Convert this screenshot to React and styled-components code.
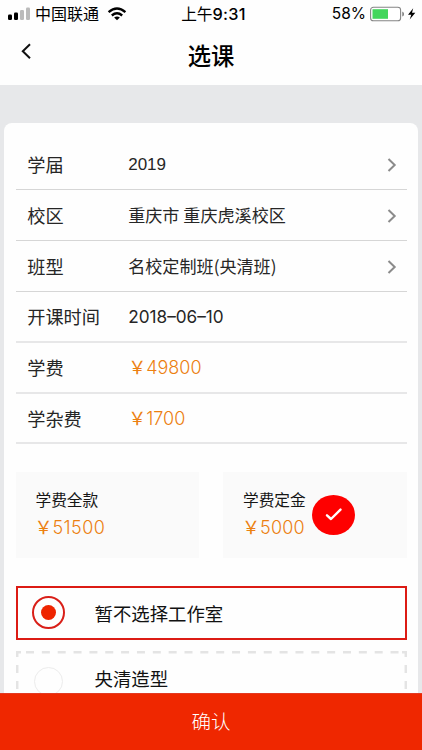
import React from "react";
import styled, { createGlobalStyle } from "styled-components";

const GlobalStyle = createGlobalStyle`
  * { box-sizing: border-box; }
  body {
    margin: 0;
    background: #e7e8ea;
    font-family: "Noto Sans CJK SC", sans-serif;
    color: #262626;
  }
`;

const Screen = styled.div`
  display: flex;
  flex-direction: column;
  width: 422px;
  height: 750px;
  overflow: hidden;
  background: #e7e8ea;
`;

const Header = styled.header`
  flex: none;
  height: 85px;
  background: #fefefe;
  color: #000;
`;

const StatusBar = styled.div`
  display: grid;
  grid-template-columns: 1fr auto 1fr;
  align-items: center;
  height: 28px;
  padding: 0 6px 0 8px;
  line-height: 28px;
`;

const Carrier = styled.div`
  display: flex;
  align-items: center;
  gap: 5px;
  height: 28px;
  font-size: 16px;
`;

const CarrierName = styled.span`
  height: 28px;
  line-height: 27px;
`;

const SignalIcon = styled.svg`
  display: block;
  width: 22px;
  height: 14px;
`;

const WifiIcon = styled.svg`
  display: block;
  width: 20px;
  height: 14px;
  margin-left: 3px;
`;

const Clock = styled.div`
  display: flex;
  height: 28px;
  padding-left: 3px;
  font-size: 15.7px;
  line-height: 28px;
`;

const ClockDigits = styled.span`
  font-family: Inter, sans-serif;
  font-weight: 500;
  font-size: 16.3px;
  letter-spacing: 0.3px;
`;

const Power = styled.div`
  display: flex;
  justify-content: flex-end;
  align-items: center;
  gap: 4px;
  height: 28px;
  font-family: Inter, sans-serif;
  font-size: 15.5px;
  line-height: 28px;
`;

const BatteryIcon = styled.svg`
  display: block;
  width: 46px;
  height: 16px;
`;

const NavBar = styled.nav`
  display: grid;
  grid-template-columns: 60px 1fr 60px;
  height: 57px;
`;

const BackButton = styled.button`
  display: flex;
  padding: 14px 0 0 20px;
  border: 0;
  background: none;
  color: #000;
`;

const Title = styled.h1`
  margin: 0;
  padding-top: 9px;
  text-align: center;
  font-size: 23.3px;
  line-height: 36px;
  font-weight: 500;
`;

const Content = styled.main`
  flex: 1;
  min-height: 0;
  overflow: hidden;
  padding: 38px 4px 0;
`;

const Card = styled.section`
  height: 700px;
  padding: 16px 11px 0 11.5px;
  border-radius: 8px;
  background: #fefefe;
`;

const Row = styled.div`
  display: grid;
  grid-template-columns: 101px 1fr auto;
  align-items: center;
  height: ${(p) => p.$height || 51}px;
  padding: 0 10.5px 1px 11.7px;
  border-bottom: ${(p) => (p.$thick ? "2px solid #e7e7e8" : "1px solid #d6d6d6")};
`;

const Label = styled.span`
  font-size: 18.2px;
  line-height: 26px;
`;

const Value = styled.span`
  font-size: 17.1px;
  line-height: 26px;
`;

const Digits = styled.span`
  font-family: "Liberation Sans", sans-serif;
  font-size: 17px;
`;

const DateDigits = styled.span`
  font-family: Inter, sans-serif;
  font-weight: 400;
  font-size: 17.2px;
  letter-spacing: 0;
`;

const Money = styled.span`
  color: #ec8010;
  font-size: 18px;
  line-height: 26px;
`;

const Amount = styled.span`
  font-family: Inter, sans-serif;
  font-weight: 350;
  font-size: 18px;
  letter-spacing: ${(p) => p.$spacing || 0}px;
`;

const PlanList = styled.div`
  display: flex;
  gap: 24px;
  margin-top: 28px;
`;

const Plan = styled.button`
  display: flex;
  align-items: flex-start;
  gap: 6px;
  width: 183.5px;
  height: 86px;
  padding: 15px 0 0 20px;
  border: 0;
  background: #fafafa;
  text-align: left;
  font: inherit;
  color: #161616;
`;

const PlanText = styled.span`
  display: flex;
  flex-direction: column;
  width: 63px;
  white-space: nowrap;
`;

const PlanName = styled.span`
  font-size: 15.7px;
  line-height: 26px;
`;

const PlanPrice = styled(Money)`
  margin-left: -1px;
`;

const CheckBadge = styled.span`
  display: flex;
  align-items: center;
  justify-content: center;
  width: 43px;
  height: 40px;
  margin-top: 8px;
  border-radius: 50%;
  background: #fe0000;
`;

const Studio = styled.label`
  display: flex;
  align-items: center;
  position: relative;
  height: 54px;
  margin-top: ${(p) => (p.$selected ? 28 : 11)}px;
  padding-left: ${(p) => (p.$selected ? 14 : 18)}px;
  border: ${(p) => (p.$selected ? "2.5px solid #dc1b14" : "0")};
`;

const DashedFrame = styled.svg`
  position: absolute;
  inset: 0;
  width: 391px;
  height: 54px;
`;

const Radio = styled.span`
  display: flex;
  align-items: center;
  justify-content: center;
  width: ${(p) => (p.$selected ? 33 : 29)}px;
  height: ${(p) => (p.$selected ? 33 : 29)}px;
  margin: ${(p) => (p.$selected ? "0 0 2px" : "6px 0 0")};
  border: ${(p) => (p.$selected ? "2px solid #d91f18" : "1px solid #ececec")};
  border-radius: 50%;
`;

const RadioDot = styled.span`
  width: 15px;
  height: 15px;
  border-radius: 50%;
  background: #ee2400;
`;

const StudioName = styled.span`
  margin-left: ${(p) => p.$gap}px;
  font-size: 18.4px;
  line-height: 26px;
  color: #111;
`;

const ConfirmButton = styled.button`
  flex: none;
  height: 57px;
  padding: 0 0 4px;
  border: 0;
  border-top: 1px solid #e33a22;
  background: #ef2700;
  color: #fff;
  font-family: inherit;
  font-size: 19.5px;
  font-weight: 300;
`;

function Chevron() {
  return (
    <svg width="10" height="16" viewBox="0 0 10 16" fill="none" stroke="#8b8b8b" strokeWidth="2">
      <path d="M1.5 3 7.7 9 1.5 15" />
    </svg>
  );
}

export default function App() {
  return (
    <Screen>
      <GlobalStyle />
      <Header>
        <StatusBar>
          <Carrier>
            <SignalIcon viewBox="0 0 22 14">
              <rect x="0" y="7.5" width="4" height="5.5" rx="1.2" />
              <rect x="6" y="5.5" width="4" height="7.5" rx="1.2" />
              <rect x="12" y="3" width="4" height="10" rx="1.2" fill="#bbb" />
              <rect x="18" y="0.5" width="4" height="12.5" rx="1.2" fill="#bbb" />
            </SignalIcon>
            <CarrierName>中国联通</CarrierName>
            <WifiIcon viewBox="0 0 20 14" fill="none" stroke="#000" strokeWidth="2.4">
              <path d="M1.6 5.1Q10-2.2 18.4 5.1" />
              <path d="M4.8 8.5Q10 4.2 15.2 8.5" />
              <path d="M10 13.2 7.1 10.6Q10 8.3 12.9 10.6Z" fill="#000" stroke="none" />
            </WifiIcon>
          </Carrier>
          <Clock>
            上午<ClockDigits>9:31</ClockDigits>
          </Clock>
          <Power>
            <span>58%</span>
            <BatteryIcon viewBox="0 0 46 16">
              <rect x="0.6" y="1.2" width="30" height="13.6" rx="2.8" fill="#fff" stroke="#858585" strokeWidth="1.1" />
              <rect x="2.5" y="3.2" width="15.5" height="9.6" fill="#43d65c" />
              <path d="M32.3 5.5Q34 6 34 8T32.3 10.5Z" fill="#777" />
              <path d="M43.2 2.3 38 8.7H41.3L39.7 13.6 45.3 6.8H42Z" />
            </BatteryIcon>
          </Power>
        </StatusBar>
        <NavBar>
          <BackButton aria-label="返回">
            <svg width="12" height="18" viewBox="0 0 12 18" fill="none" stroke="#111" strokeWidth="2">
              <path d="M10 2.3 2.8 9.3 10 16.3" />
            </svg>
          </BackButton>
          <Title>选课</Title>
        </NavBar>
      </Header>
      <Content>
        <Card>
          <Row>
            <Label>学届</Label>
            <Value><Digits>2019</Digits></Value>
            <Chevron />
          </Row>
          <Row>
            <Label>校区</Label>
            <Value>重庆市 重庆虎溪校区</Value>
            <Chevron />
          </Row>
          <Row>
            <Label>班型</Label>
            <Value>名校定制班(央清班)</Value>
            <Chevron />
          </Row>
          <Row $thick>
            <Label>开课时间</Label>
            <Value><DateDigits>2018–06–10</DateDigits></Value>
          </Row>
          <Row $thick>
            <Label>学费</Label>
            <Money>￥<Amount>49800</Amount></Money>
          </Row>
          <Row $thick $height={50}>
            <Label>学杂费</Label>
            <Money>￥<Amount>1700</Amount></Money>
          </Row>
          <PlanList>
            <Plan>
              <PlanText>
                <PlanName>学费全款</PlanName>
                <PlanPrice>￥<Amount $spacing={0.4}>51500</Amount></PlanPrice>
              </PlanText>
            </Plan>
            <Plan>
              <PlanText>
                <PlanName>学费定金</PlanName>
                <PlanPrice>￥<Amount $spacing={0.2}>5000</Amount></PlanPrice>
              </PlanText>
              <CheckBadge>
                <svg width="18" height="14" viewBox="0 0 18 14" fill="none" stroke="#fff" strokeWidth="2.4" strokeLinecap="round" strokeLinejoin="round">
                  <path d="M2 7.3 6 11 15.5 1.6" />
                </svg>
              </CheckBadge>
            </Plan>
          </PlanList>
          <Studio $selected>
            <Radio $selected><RadioDot /></Radio>
            <StudioName $gap={30}>暂不选择工作室</StudioName>
          </Studio>
          <Studio>
            <DashedFrame viewBox="0 0 391 54" fill="none" stroke="#e4e4e4" strokeWidth="2.5">
              <path d="M1.2 6V1.2H5" />
              <path d="M10 1.2H386" strokeDasharray="8 7.85" />
              <path d="M386 1.2H389.8V6" />
              <path d="M1.2 14V54M389.8 14V54" strokeDasharray="8 8" />
            </DashedFrame>
            <Radio />
            <StudioName $gap={32}>央清造型</StudioName>
          </Studio>
        </Card>
      </Content>
      <ConfirmButton>确认</ConfirmButton>
    </Screen>
  );
}
